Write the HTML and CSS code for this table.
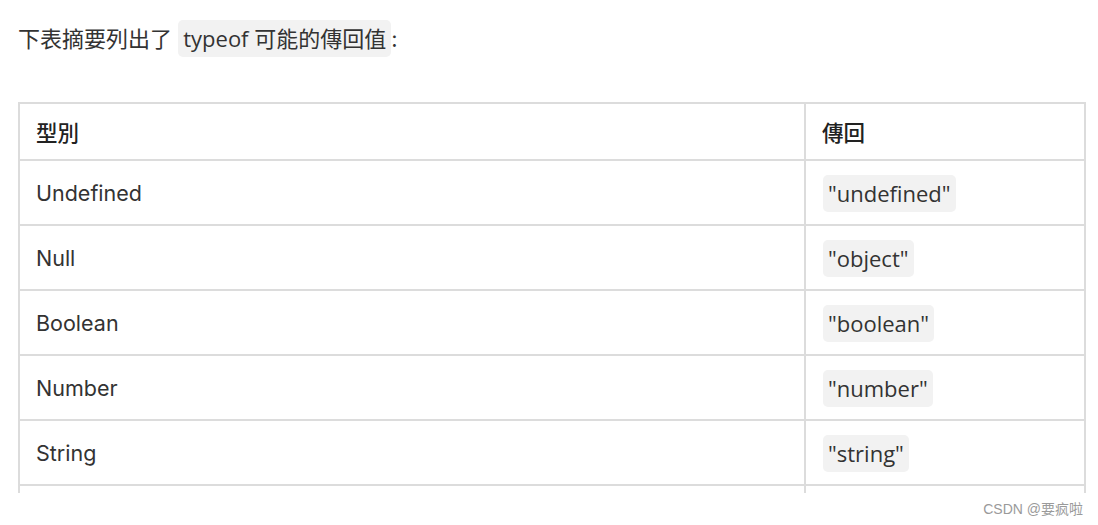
FILE: index.html
```html
<!DOCTYPE html>
<html lang="zh-Hant">
<head>
<meta charset="utf-8">
<link rel="stylesheet" href="styles.css">
</head>
<body>
<div class="page">
  <p class="intro">下表摘要列出了 <code class="code">typeof 可能的傳回值</code>:</p>
  <div class="table-wrap">
    <table class="tbl">
      <thead>
        <tr><th class="c1">型別</th><th class="c2">傳回</th></tr>
      </thead>
      <tbody>
        <tr><td>Undefined</td><td><code class="code">"undefined"</code></td></tr>
        <tr><td>Null</td><td><code class="code">"object"</code></td></tr>
        <tr><td>Boolean</td><td><code class="code">"boolean"</code></td></tr>
        <tr><td>Number</td><td><code class="code">"number"</code></td></tr>
        <tr><td>String</td><td><code class="code">"string"</code></td></tr>
        <tr><td></td><td></td></tr>
      </tbody>
    </table>
  </div>
  <div class="watermark">CSDN @要疯啦</div>
</div>
</body>
</html>
```
FILE: styles.css
```css
html, body {
  margin: 0;
  padding: 0;
  background: #ffffff;
}
.page {
  position: relative;
  width: 1098px;
  height: 525px;
  overflow: hidden;
  font-family: "Inter", "Noto Sans CJK TC", sans-serif;
  color: #333333;
}
.intro {
  margin: 0;
  padding: 21px 0 0 18px;
  font-size: 22px;
  line-height: 34px;
  height: 34px;
}
.code {
  font-family: "Open Sans", "Noto Sans CJK TC", sans-serif;
  font-size: 22px;
  background: #f2f2f2;
  border-radius: 5px;
  padding: 3px 5px 4px 5px;
  color: #333333;
}
.table-wrap {
  margin: 47px 0 0 18px;
  width: 1068px;
  height: 391px;
  overflow: hidden;
}
.tbl {
  width: 1068px;
  border-collapse: collapse;
  table-layout: fixed;
}
.tbl th, .tbl td {
  border: 2px solid #dcdcdc;
  text-align: left;
  padding: 0 0 0 16px;
  font-size: 21.5px;
  vertical-align: middle;
}
.tbl td .code {
  margin-left: 1px;
}
.tbl th {
  height: 55px;
  font-weight: 500;
  color: #222222;
  font-family: "Noto Sans CJK TC", sans-serif;
}
.tbl td {
  height: 63px;
}
.c1 { width: 768px; }
.watermark {
  position: absolute;
  right: 15px;
  top: 498px;
  font-family: "Liberation Sans", "Noto Sans CJK SC", sans-serif;
  font-size: 14px;
  color: #9a9a9a;
}
```
